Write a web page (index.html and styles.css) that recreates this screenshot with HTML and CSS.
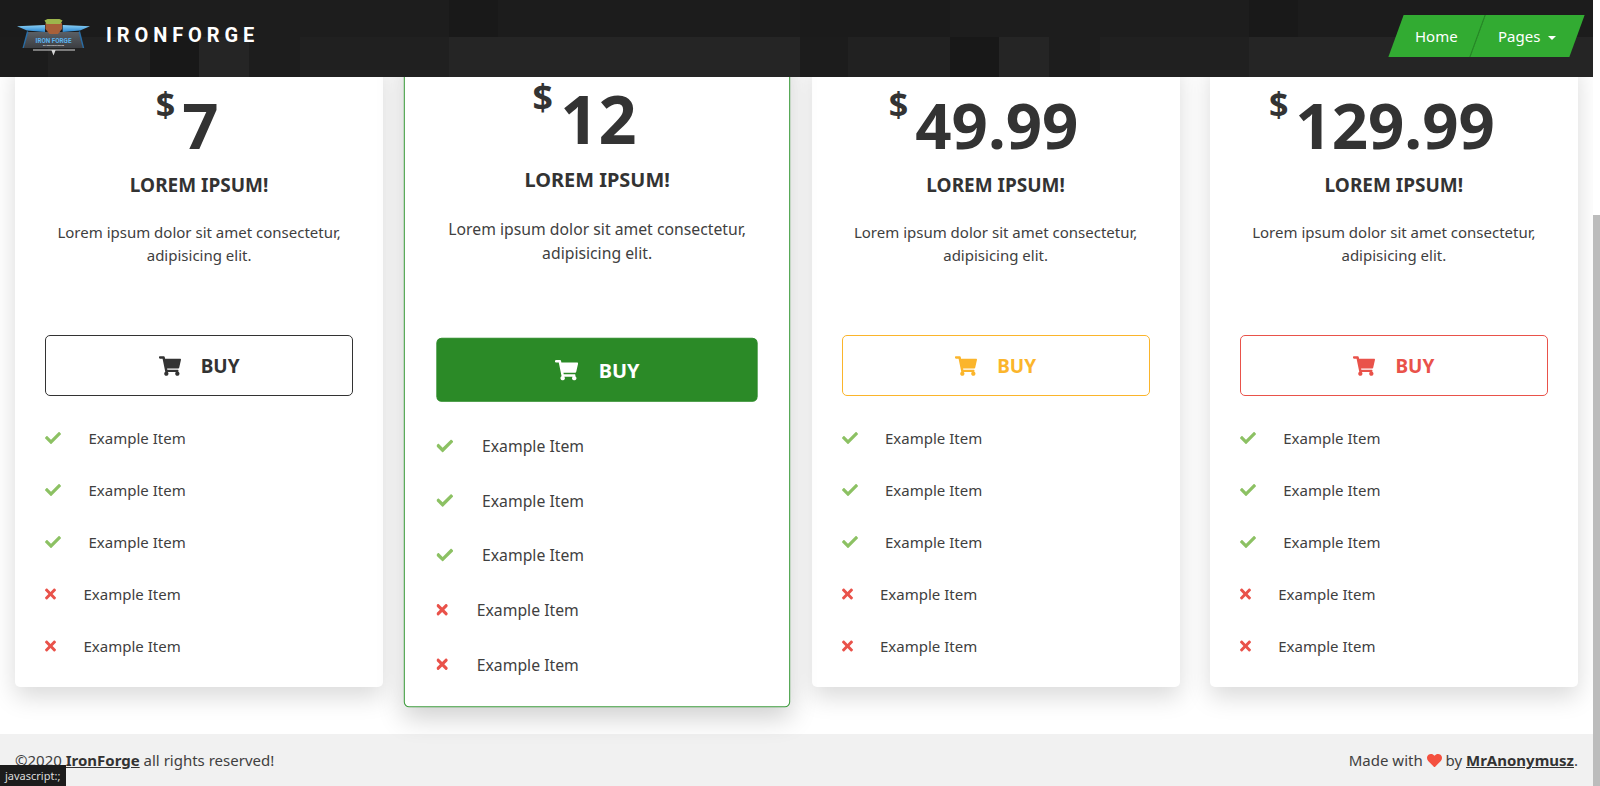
FILE: index.html
```html
<!DOCTYPE html>
<html lang="en">
<head>
<meta charset="utf-8">
<title>IronForge</title>
<link rel="stylesheet" href="styles.css">
</head>
<body>
<svg class="defs" width="0" height="0" aria-hidden="true">
  <symbol id="i-cart" viewBox="0 0 576 512"><path d="M528.12 301.319l47.273-208C578.806 78.301 567.391 64 551.99 64H159.208l-9.166-44.81C147.758 8.021 137.93 0 126.529 0H24C10.745 0 0 10.745 0 24v16c0 13.255 10.745 24 24 24h69.883l70.248 343.435C147.325 417.1 136 435.222 136 456c0 30.928 25.072 56 56 56s56-25.072 56-56c0-15.674-6.447-29.835-16.824-40h209.647C430.447 426.165 424 440.326 424 456c0 30.928 25.072 56 56 56s56-25.072 56-56c0-22.172-12.888-41.332-31.579-50.405l5.517-24.276c3.413-15.018-8.002-29.319-23.403-29.319H218.117l-6.545-32h293.145c11.206 0 20.92-7.754 23.403-18.681z"/></symbol>
  <symbol id="i-check" viewBox="0 0 512 512"><path d="M173.898 439.404l-166.4-166.4c-9.997-9.997-9.997-26.206 0-36.204l36.203-36.204c9.997-9.998 26.207-9.998 36.204 0L192 312.69 432.095 72.596c9.997-9.997 26.207-9.997 36.204 0l36.203 36.204c9.997 9.997 9.997 26.206 0 36.204l-294.4 294.401c-9.998 9.997-26.207 9.997-36.204-.001z"/></symbol>
  <symbol id="i-times" viewBox="0 0 352 512"><path d="M242.72 256l100.07-100.07c12.28-12.28 12.28-32.19 0-44.48l-22.24-22.24c-12.28-12.28-32.19-12.28-44.48 0L176 189.28 75.93 89.21c-12.28-12.28-32.19-12.28-44.48 0L9.21 111.45c-12.28 12.28-12.28 32.19 0 44.48L109.28 256 9.21 356.07c-12.28 12.28-12.28 32.19 0 44.48l22.24 22.24c12.28 12.28 32.2 12.28 44.48 0L176 322.72l100.07 100.07c12.28 12.28 32.2 12.28 44.48 0l22.24-22.24c12.28-12.28 12.28-32.19 0-44.48L242.72 256z"/></symbol>
  <symbol id="i-heart" viewBox="0 0 512 512"><path d="M462.3 62.6C407.5 15.9 326 24.3 275.7 76.2L256 96.5l-19.7-20.3C186.1 24.3 104.5 15.9 49.7 62.6c-62.8 53.6-66.1 149.8-9.9 207.9l193.5 199.8c12.5 12.9 32.8 12.9 45.3 0l193.5-199.8c56.3-58.1 53-154.3-9.8-207.9z"/></symbol>
  <linearGradient id="wing" x1="0" y1="0" x2="0" y2="1"><stop offset="0" stop-color="#8ad0f6"/><stop offset="1" stop-color="#2a86cf"/></linearGradient>
  <linearGradient id="shield" x1="0" y1="0" x2="0" y2="1"><stop offset="0" stop-color="#5a5f65"/><stop offset="1" stop-color="#3c3e42"/></linearGradient>
</svg>
<div class="window">
  <header class="topbar">
    <a class="brand" href="#">
      <svg class="logo" viewBox="0 0 74 38" width="74" height="38" aria-hidden="true">
        <polygon points="0,7.200 28,6 28,13 10,11.500" fill="url(#wing)"/>
        <polygon points="73,7.200 45.700,6 45.700,13 63,11.500" fill="url(#wing)"/>
        <polygon points="11,13 62,13 66.300,29 6.300,29" fill="url(#shield)"/>
        <polygon points="10,12 11.500,13 6.800,29 5.500,29" fill="#2a6da5"/>
        <polygon points="63,12 61.500,13 65.800,29 67.200,29" fill="#2a6da5"/>
        <path d="M28.500 4h16.500v6l-4 5h-8.500l-4-5z" fill="#a8603a"/>
        <path d="M27.500 1.500l3-1.500h12l3 1.500-2 3.500h-14z" fill="#9db54c"/>
        <text class="logo-name" x="36.500" y="23.500" text-anchor="middle">IRON FORGE</text>
        <text class="logo-sub" x="36.500" y="26.800" text-anchor="middle">BY MRANONYMUSZ</text>
        <polygon points="16,30.500 58,30.500 58,31.500 38.500,31.500 36.500,36.500 34.500,31.500 16,31.500" fill="#d8d8d8"/>
      </svg>
      <span class="brand-name">IRONFORGE</span>
    </a>
    <nav class="menu">
      <a class="menu-item menu-home" href="#"><span class="menu-label">Home</span></a>
      <a class="menu-item" href="#"><span class="menu-label">Pages<i class="caret"></i></span></a>
    </nav>
  </header>

  <main class="pricing">
    <section class="card">
      <div class="price"><sup class="currency">$</sup><span>7</span></div>
      <h3 class="plan">LOREM IPSUM!</h3>
      <p class="desc">Lorem ipsum dolor sit amet consectetur, adipisicing elit.</p>
      <a class="buy buy-dark" href="#"><svg class="cart"><use href="#i-cart"/></svg>BUY</a>
      <ul class="items">
        <li><svg class="yes"><use href="#i-check"/></svg>Example Item</li>
        <li><svg class="yes"><use href="#i-check"/></svg>Example Item</li>
        <li><svg class="yes"><use href="#i-check"/></svg>Example Item</li>
        <li><svg class="no"><use href="#i-times"/></svg>Example Item</li>
        <li><svg class="no"><use href="#i-times"/></svg>Example Item</li>
      </ul>
    </section>
    <section class="card card-featured">
      <div class="price"><sup class="currency">$</sup><span>12</span></div>
      <h3 class="plan">LOREM IPSUM!</h3>
      <p class="desc">Lorem ipsum dolor sit amet consectetur, adipisicing elit.</p>
      <a class="buy buy-green" href="#"><svg class="cart"><use href="#i-cart"/></svg>BUY</a>
      <ul class="items">
        <li><svg class="yes"><use href="#i-check"/></svg>Example Item</li>
        <li><svg class="yes"><use href="#i-check"/></svg>Example Item</li>
        <li><svg class="yes"><use href="#i-check"/></svg>Example Item</li>
        <li><svg class="no"><use href="#i-times"/></svg>Example Item</li>
        <li><svg class="no"><use href="#i-times"/></svg>Example Item</li>
      </ul>
    </section>
    <section class="card">
      <div class="price"><sup class="currency">$</sup><span>49.99</span></div>
      <h3 class="plan">LOREM IPSUM!</h3>
      <p class="desc">Lorem ipsum dolor sit amet consectetur, adipisicing elit.</p>
      <a class="buy buy-yellow" href="#"><svg class="cart"><use href="#i-cart"/></svg>BUY</a>
      <ul class="items">
        <li><svg class="yes"><use href="#i-check"/></svg>Example Item</li>
        <li><svg class="yes"><use href="#i-check"/></svg>Example Item</li>
        <li><svg class="yes"><use href="#i-check"/></svg>Example Item</li>
        <li><svg class="no"><use href="#i-times"/></svg>Example Item</li>
        <li><svg class="no"><use href="#i-times"/></svg>Example Item</li>
      </ul>
    </section>
    <section class="card">
      <div class="price"><sup class="currency">$</sup><span>129.99</span></div>
      <h3 class="plan">LOREM IPSUM!</h3>
      <p class="desc">Lorem ipsum dolor sit amet consectetur, adipisicing elit.</p>
      <a class="buy buy-red" href="#"><svg class="cart"><use href="#i-cart"/></svg>BUY</a>
      <ul class="items">
        <li><svg class="yes"><use href="#i-check"/></svg>Example Item</li>
        <li><svg class="yes"><use href="#i-check"/></svg>Example Item</li>
        <li><svg class="yes"><use href="#i-check"/></svg>Example Item</li>
        <li><svg class="no"><use href="#i-times"/></svg>Example Item</li>
        <li><svg class="no"><use href="#i-times"/></svg>Example Item</li>
      </ul>
    </section>
  </main>

  <footer class="footer">
    <span>©2020 <a href="#">IronForge</a> all rights reserved!</span>
    <span>Made with <svg class="heart"><use href="#i-heart"/></svg> by <a href="#">MrAnonymusz</a>.</span>
  </footer>
</div>
<div class="scrollbar"><div class="thumb"></div></div>
<div class="status">javascript:;</div>
</body>
</html>
```

FILE: styles.css
```css
* { box-sizing: border-box; }
html, body { height: 100%; }
body {
  margin: 0;
  display: flex;
  overflow: hidden;
  background: #fff;
  color: #404040;
  font-family: "Noto Sans", sans-serif;
  font-size: 15px;
}
.defs { position: absolute; }
a { color: inherit; text-decoration: none; }

.window {
  width: 1593px;
  height: 786px;
  position: relative;
  display: flex;
  flex-direction: column;
  overflow: hidden;
}
.scrollbar {
  width: 7px;
  display: flex;
  flex-direction: column;
  padding-top: 215px;
}
.thumb { flex: 1; background: #bcbcbc; }

.topbar {
  position: absolute;
  top: 0;
  left: 0;
  right: 0;
  z-index: 5;
  height: 77px;
  display: flex;
  align-items: center;
  justify-content: space-between;
  padding: 0 16px 0 17px;
  background-color: #1c1c1c;
  background-image:
    linear-gradient(90deg, #1b1b1b 0 150px, #1d1d1d 150px 449px, #191919 449px 498px, #1c1c1c 498px 800px),
    linear-gradient(90deg, #1c1c1c 0 48px, #212121 48px 150px, #181818 150px 199px, #252525 199px 249px, #1d1d1d 249px 300px, #202020 300px 449px, #252525 449px 800px);
  background-size: 800px 37px, 800px 40px;
  background-position: 0 0, 0 37px;
  background-repeat: repeat-x;
}
.brand { display: flex; align-items: center; gap: 15px; }
.logo { display: block; margin-top: -2px; }
.logo-name { font: 700 6.300px "Roboto", sans-serif; fill: #5ab4f0; }
.logo-sub { font: 700 2.300px "Roboto", sans-serif; fill: #ddd; }
.brand-name {
  color: #fff;
  font-family: "Roboto", sans-serif;
  font-weight: 700;
  font-size: 20px;
  letter-spacing: 4.9px;
  margin-top: -8px;
}
.menu { display: flex; margin-top: -5px; }
.menu-item {
  display: block;
  height: 42px;
  line-height: 42px;
  padding: 0 20px;
  width: 99px;
  background: #32ab32;
  color: #fff;
  transform: skewX(-20deg);
}
.menu-home { width: 82px; padding-left: 19px; border-right: 1px solid #238223; }
.menu-label { display: block; transform: skewX(20deg); white-space: nowrap; }
.caret {
  display: inline-block;
  margin-left: 8px;
  vertical-align: 2px;
  border: 4.500px solid transparent;
  border-top-color: #fff;
  border-bottom: 0;
}

.pricing {
  flex: none;
  height: 734px;
  padding-top: 60px;
  display: grid;
  grid-template-columns: repeat(4, 1fr);
}
.card {
  margin: 0 15px;
  height: 627px;
  padding: 0 30px;
  background: #fff;
  border-radius: 5px;
  box-shadow: 0 10px 25px rgba(0, 0, 0, .15);
  transform-origin: 50% 220px;
}
.card-featured {
  border: 1px solid #3f9d3f;
  transform: scale(1.05);
  box-shadow: 0 10px 25px rgba(0, 0, 0, .19);
}
.price {
  display: flex;
  justify-content: center;
  padding-right: 24px;
  height: 100px;
  color: #333;
  font-weight: 700;
  font-size: 63.500px;
  line-height: 90px;
  padding-top: 20px;
}
.currency {
  font-size: 34px;
  line-height: 1;
  margin: 7px 7px 0 0;
}
.plan {
  margin: 10px 0 0;
  text-align: center;
  color: #333;
  font-size: 19px;
  line-height: 30px;
  font-weight: 700;
}
.desc {
  margin: 21px 0 0;
  height: 114px;
  text-align: center;
  line-height: 23px;
}
.card-featured .plan { margin-top: 8px; }
.card-featured .desc { height: 115px; }
.buy {
  display: flex;
  align-items: center;
  justify-content: center;
  gap: 20px;
  height: 61px;
  border: 1px solid;
  border-radius: 5px;
  font-size: 19px;
  font-weight: 700;
}
.cart { width: 22px; height: 20px; fill: currentColor; }
.buy-dark { color: #333; border-color: #333; }
.buy-green { color: #fff; background: #2b8a27; border-color: #2b8a27; }
.buy-yellow { color: #fbb52b; border-color: #fbb52b; }
.buy-red { color: #e9524a; border-color: #e9524a; }
.items {
  list-style: none;
  margin: 16px 0 0;
  padding: 0;
}
.items li {
  display: flex;
  align-items: center;
  gap: 27.500px;
  height: 52px;
}
.yes { width: 16px; height: 16px; fill: #8cc163; }
.no { width: 11px; height: 16px; fill: #e9524a; }

.footer {
  flex: none;
  height: 52px;
  display: flex;
  justify-content: space-between;
  align-items: center;
  padding: 0 15px 0 15px;
  background: #f1f1f1;
}
.footer a { font-weight: 700; color: #333; text-decoration: underline; }
.heart { width: 15px; height: 15px; fill: #f4503f; vertical-align: -2px; }

.status {
  position: fixed;
  left: 0;
  bottom: 0;
  height: 21px;
  width: 66px;
  padding-left: 5px;
  background: #1c1c1c;
  color: #ddd;
  font-size: 11px;
  line-height: 21px;
  white-space: nowrap;
}
```
